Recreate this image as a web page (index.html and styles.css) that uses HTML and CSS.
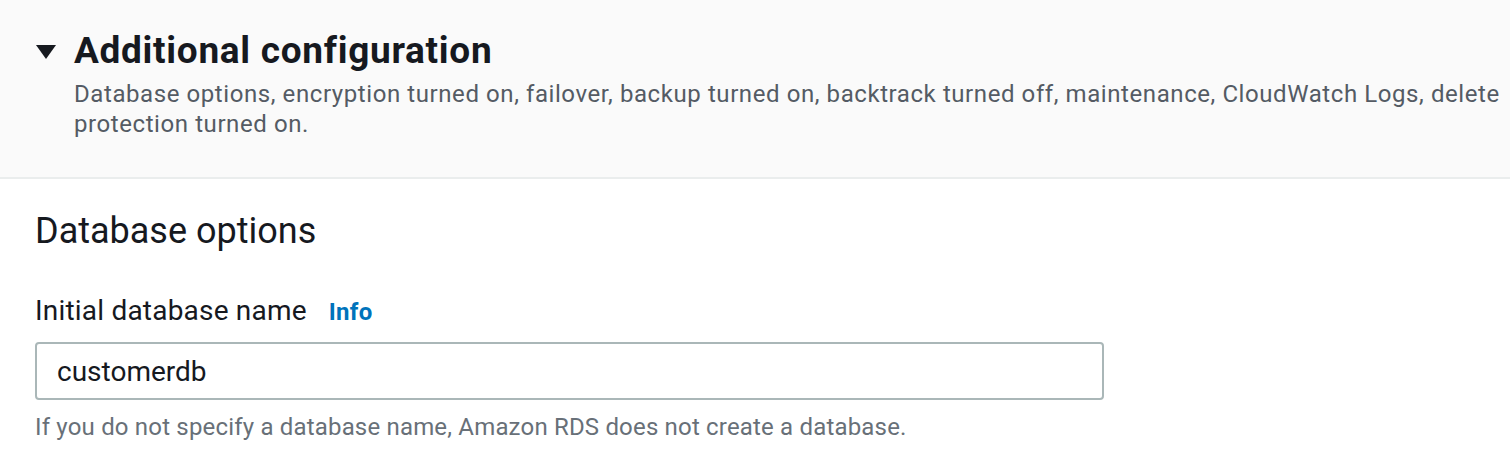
FILE: index.html
```html
<!DOCTYPE html>
<html lang="en">
<head>
<meta charset="utf-8">
<title>Additional configuration</title>
<link rel="stylesheet" href="styles.css">
</head>
<body>
<section class="expander">
  <header class="expander-header">
    <div class="expander-title-row">
      <svg class="caret" width="20" height="14" viewBox="0 0 20 14" aria-hidden="true"><polygon points="0,0 20,0 10,14" fill="#16191f"/></svg>
      <h2 class="expander-title">Additional configuration</h2>
    </div>
    <p class="expander-desc">Database options, encryption turned on, failover, backup turned on, backtrack turned off, maintenance, CloudWatch Logs, delete protection turned on.</p>
  </header>
  <div class="expander-body">
    <h3 class="section-title">Database options</h3>
    <div class="field">
      <div class="field-label-row">
        <label class="field-label" for="dbname">Initial database name</label>
        <a class="info-link" href="#">Info</a>
      </div>
      <input class="text-input" id="dbname" type="text" value="customerdb">
      <p class="field-hint">If you do not specify a database name, Amazon RDS does not create a database.</p>
    </div>
  </div>
</section>
</body>
</html>
```
FILE: styles.css
```css
html, body {
  margin: 0;
  padding: 0;
  background: #ffffff;
  font-family: Roboto, "Liberation Sans", Arial, sans-serif;
  color: #16191f;
}

.expander-header {
  background: #fafafa;
  border-bottom: 2px solid #eaeded;
  padding: 29px 10px 38px 36px;
  height: 110px;
}

.expander-title-row {
  display: flex;
  align-items: center;
  gap: 18px;
  height: 44px;
}

.caret {
  display: block;
  flex: none;
  margin-top: 1px;
}

.expander-title {
  margin: 0;
  font-size: 37px;
  line-height: 44px;
  font-weight: 700;
  letter-spacing: 0.7px;
}

.expander-desc {
  margin: 6px 0 0 38px;
  font-size: 24px;
  line-height: 30px;
  letter-spacing: 0.58px;
  color: #545b64;
}

.expander-body {
  padding: 30px 35px 0 35px;
}

.section-title {
  margin: 0;
  font-size: 36px;
  line-height: 44px;
  font-weight: 400;
}

.field {
  margin-top: 40px;
}

.field-label-row {
  display: flex;
  align-items: baseline;
  gap: 22px;
}

.field-label {
  font-size: 28px;
  line-height: 36px;
  letter-spacing: 0.2px;
  color: #16191f;
}

.info-link {
  font-size: 24px;
  line-height: 36px;
  font-weight: 700;
  letter-spacing: 0.3px;
  color: #0073bb;
  text-decoration: none;
}

.text-input {
  display: block;
  box-sizing: border-box;
  margin-top: 12px;
  width: 1069px;
  height: 58px;
  padding: 0 20px;
  border: 2px solid #aab7b8;
  border-radius: 4px;
  background: #ffffff;
  font-family: inherit;
  font-size: 28px;
  color: #16191f;
  outline: none;
}

.field-hint {
  margin: 12px 0 0 0;
  font-size: 24px;
  line-height: 30px;
  letter-spacing: 0.18px;
  color: #687078;
}
```
